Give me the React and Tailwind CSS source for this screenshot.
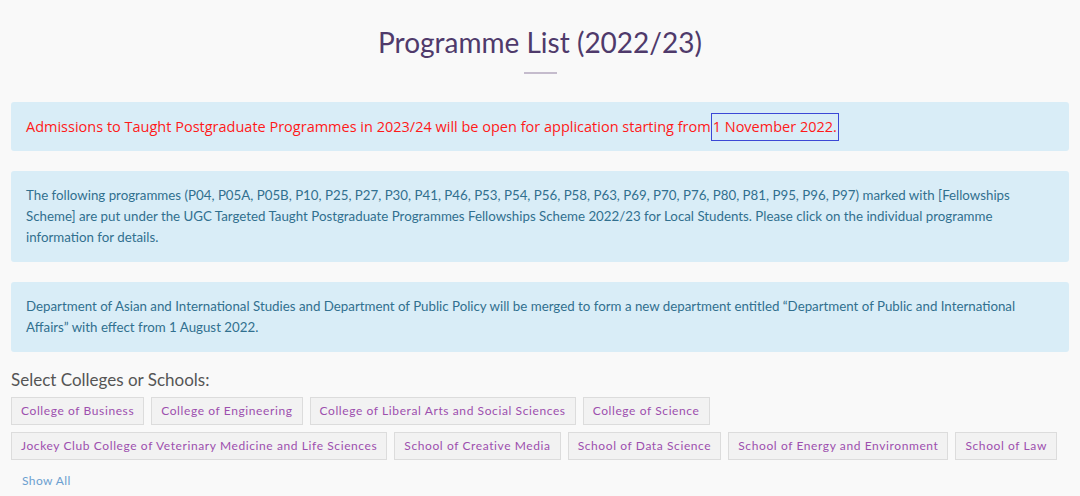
import React from "react";

const colleges = [
  "College of Business",
  "College of Engineering",
  "College of Liberal Arts and Social Sciences",
  "College of Science",
  "Jockey Club College of Veterinary Medicine and Life Sciences",
  "School of Creative Media",
  "School of Data Science",
  "School of Energy and Environment",
  "School of Law",
];

export default function App() {
  return (
    <div className="min-h-[496px] bg-[#f9f9f9] px-[11px] pt-[22px] font-['Lato',sans-serif]">
      {/* Title */}
      <h1 className="text-center text-[28px] leading-[40px] text-[#4f3a6b]">
        Programme List (2022/23)
      </h1>
      <div className="mx-auto mt-[10px] h-[2px] w-[33px] bg-[#c5bccd]" />

      {/* Admissions notice */}
      <div className="mt-[28px] flex h-[49px] items-center rounded-[3px] bg-[#d9edf7] px-[15px] font-['Open_Sans',sans-serif] text-[14.5px] text-[#ff1a1a]">
        <span>
          Admissions to Taught Postgraduate Programmes in 2023/24 will be open
          for application starting from
        </span>
        <span className="border-[1.5px] border-[#3b48d6] px-[1px] py-[3px] leading-[20px]">
          1 November 2022.
        </span>
      </div>

      <div className="mt-[20px] rounded-[3px] bg-[#d9edf7] px-[15px] py-[14px] text-[13.3px] leading-[21px] text-[#31708f]">
        The following programmes (P04, P05A, P05B, P10, P25, P27, P30, P41, P46,
        P53, P54, P56, P58, P63, P69, P70, P76, P80, P81, P95, P96, P97) marked
        with [Fellowships Scheme] are put under the UGC Targeted Taught
        Postgraduate Programmes Fellowships Scheme 2022/23 for Local Students.
        Please click on the individual programme information for details.
      </div>

      <div className="mt-[20px] rounded-[3px] bg-[#d9edf7] px-[15px] py-[14px] text-[13.3px] leading-[21px] text-[#31708f]">
        Department of Asian and International Studies and Department of Public
        Policy will be merged to form a new department entitled “Department of
        Public and International Affairs” with effect from 1 August 2022.
      </div>

      {/* Colleges */}
      <h2 className="mt-[16px] text-[17px] leading-[24px] text-[#555]">
        Select Colleges or Schools:
      </h2>
      <div className="mt-[5px] flex flex-wrap gap-[7px]">
        {colleges.map((c) => (
          <button
            key={c}
            className="h-[28px] border border-[#dcdcdc] bg-[#f2f2f2] px-[9px] text-[12px] tracking-[0.6px] text-[#9d4fae]"
          >
            {c}
          </button>
        ))}
      </div>
      <div className="mt-[12px] pl-[11px] text-[12px] tracking-[0.4px] text-[#6c9fd0]">Show All</div>
    </div>
  );
}
